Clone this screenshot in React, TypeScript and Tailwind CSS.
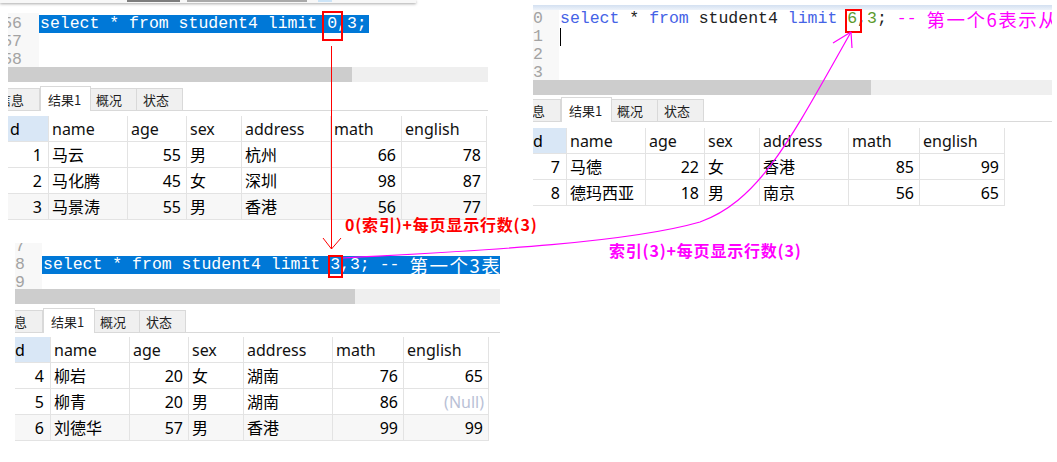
import React from 'react';

type Row = {
  id: string;
  name: string;
  age: string;
  sex: string;
  address: string;
  math: string;
  english: string | null;
};

const firstPage: Row[] = [
  { id: '1', name: '马云', age: '55', sex: '男', address: '杭州', math: '66', english: '78' },
  { id: '2', name: '马化腾', age: '45', sex: '女', address: '深圳', math: '98', english: '87' },
  { id: '3', name: '马景涛', age: '55', sex: '男', address: '香港', math: '56', english: '77' },
];

const secondPage: Row[] = [
  { id: '4', name: '柳岩', age: '20', sex: '女', address: '湖南', math: '76', english: '65' },
  { id: '5', name: '柳青', age: '20', sex: '男', address: '湖南', math: '86', english: null },
  { id: '6', name: '刘德华', age: '57', sex: '男', address: '香港', math: '99', english: '99' },
];

const thirdPage: Row[] = [
  { id: '7', name: '马德', age: '22', sex: '女', address: '香港', math: '85', english: '99' },
  { id: '8', name: '德玛西亚', age: '18', sex: '男', address: '南京', math: '56', english: '65' },
];

const headers = ['name', 'age', 'sex', 'address', 'math', 'english'];

const cell =
  'flex h-[26px] items-center overflow-hidden whitespace-nowrap border-r border-b border-[#e3e3e3]';

const code = "font-['Liberation_Mono',monospace] text-[16.5px] leading-[18px]";
const cjk =
  "inline-block align-top font-['Noto_Sans_CJK_SC',sans-serif] text-[18.5px] leading-[18px] tracking-[1.5px]";

interface TableProps {
  grid: string;
  rows: Row[];
  idPad: string;
  shadeLast?: boolean;
}

const ResultTable: React.FC<TableProps> = ({ grid, rows, idPad, shadeLast }) => (
  <div className={`grid ${grid} font-['Noto_Sans','Noto_Sans_CJK_SC',sans-serif] text-[16px] leading-none text-black`}>
    <div className={`${cell} bg-[#d9e7f6] ${idPad}`}>d</div>
    {headers.map((h) => (
      <div key={h} className={`${cell} pl-[3px] text-[#111]`}>
        {h}
      </div>
    ))}
    {rows.map((r, i) => {
      const bg = shadeLast && i === rows.length - 1 ? 'bg-[#f7f7f7]' : 'bg-white';
      return (
        <React.Fragment key={r.id}>
          <div className={`${cell} ${bg} justify-end pr-[6px]`}>{r.id}</div>
          <div className={`${cell} ${bg} pl-[3px]`}>{r.name}</div>
          <div className={`${cell} ${bg} justify-end pr-[5px]`}>{r.age}</div>
          <div className={`${cell} ${bg} pl-[3px]`}>{r.sex}</div>
          <div className={`${cell} ${bg} pl-[3px]`}>{r.address}</div>
          <div className={`${cell} ${bg} justify-end pr-[5px]`}>{r.math}</div>
          {r.english === null ? (
            <div className={`${cell} ${bg} justify-end pr-[4px] text-[#b9c1d6]`}>(Null)</div>
          ) : (
            <div className={`${cell} ${bg} justify-end pr-[5px]`}>{r.english}</div>
          )}
        </React.Fragment>
      );
    })}
  </div>
);

interface TabsProps {
  firstW: string;
  activeW: string;
  midW: string;
}

const Tabs: React.FC<TabsProps> = ({ firstW, activeW, midW }) => (
  <div className="flex h-[25px] items-end border-b border-[#d9d9d9] font-['Noto_Sans_CJK_SC',sans-serif] text-[13px] leading-none whitespace-nowrap text-[#1f1f1f]">
    <div className={`flex h-[22px] ${firstW} items-center justify-end overflow-hidden border-t border-r border-[#d9d9d9] bg-[#f0f0f0] pr-[15px]`}>
      <span className="shrink-0">信息</span>
    </div>
    <div className={`-mb-px flex h-[25px] ${activeW} items-center border-x border-t border-[#d9d9d9] bg-white pl-[7px]`}>
      结果1
    </div>
    <div className={`flex h-[22px] ${midW} items-center border-t border-r border-[#d9d9d9] bg-[#f0f0f0] pl-[5px]`}>
      概况
    </div>
    <div className="flex h-[22px] w-[46px] items-center border-t border-r border-[#d9d9d9] bg-[#f0f0f0] pl-[6px]">
      状态
    </div>
  </div>
);

const Scrollbar: React.FC<{ thumb: string }> = ({ thumb }) => (
  <div className="h-[15px] bg-[#efefef]">
    <div className={`h-full ${thumb} bg-[#cdcdcd]`} />
  </div>
);

const Annotations: React.FC = () => (
  <>
    <svg
      className="pointer-events-none absolute top-0 left-0"
      width={1057}
      height={462}
      viewBox="0 0 1057 462"
      fill="none"
    >
      {/* red boxes round the offsets */}
      <rect x={323} y={12} width={19} height={28} stroke="#ff0000" strokeWidth={2} />
      <rect x={329} y={256} width={13} height={21} stroke="#ff0000" strokeWidth={2} />
      <rect x={846} y={10} width={15} height={22} stroke="#ff0000" strokeWidth={2} />

      {/* red arrow down */}
      <path d="M331.5 46 V249" stroke="#ff0000" strokeWidth={1} />
      <path d="M323 238 L331.5 249 L341 238" stroke="#ff0000" strokeWidth={1} />

      {/* magenta arrow to the right panel */}
      <path
        d="M343 258 C450 252 620 245 700 222 C760 200 790 140 851 32"
        stroke="#ff00ff"
        strokeWidth={1.2}
      />
      <path d="M833 43 L851 32 M852 48 L851 32" stroke="#ff00ff" strokeWidth={1.2} />
    </svg>

    <div className="pointer-events-none absolute top-[216px] left-[345px] font-['Noto_Sans_CJK_SC',sans-serif] text-[16px] leading-[17px] font-bold tracking-[0.8px] whitespace-nowrap text-[#ff0000]">
      0(索引)+每页显示行数(3)
    </div>
    <div className="pointer-events-none absolute top-[241px] left-[609px] font-['Noto_Sans_CJK_SC',sans-serif] text-[16px] leading-[18px] font-bold tracking-[0.8px] whitespace-nowrap text-[#ff00ff]">
      索引(3)+每页显示行数(3)
    </div>
  </>
);

export default function App() {
  return (
    <div className="relative flex h-[462px] w-[1057px] items-start overflow-hidden bg-white">
      {/* left column: first two pages */}
      <div className="flex w-[500px] shrink-0 flex-col">
        <section className="mt-[13px] ml-2 w-[480px] overflow-hidden">
          <div className={`flex h-[54px] overflow-hidden ${code}`}>
            <div className="flex w-[31px] shrink-0 flex-col overflow-hidden bg-[#f8f8f8] pt-[2px] pr-[17px] text-[#a3a3a3]">
              <div className="flex h-[18px] justify-end">56</div>
              <div className="flex h-[18px] justify-end">57</div>
              <div className="flex h-[18px] justify-end">58</div>
            </div>
            <div className="pt-[2px] whitespace-pre">
              <div className="h-[18px]">
                <span className="inline-block h-[18px] bg-[#0078d7] pr-[2px] pl-px align-top text-white">
                  select * from student4 limit 0,3;
                </span>
              </div>
            </div>
          </div>
          <Scrollbar thumb="w-[344px]" />
          <div className="mt-1">
            <Tabs firstW="w-[32px]" activeW="w-[51px]" midW="w-[46px]" />
          </div>
          <div className="mt-[5px]">
            <ResultTable
              grid="grid-cols-[41px_79px_59px_55px_89px_71px_85px]"
              rows={firstPage}
              idPad="pl-[2px]"
              shadeLast
            />
          </div>
        </section>

        <section className="mt-[23px] ml-[15px] w-[485px] overflow-hidden">
          <div className={`flex h-[46px] overflow-hidden ${code}`}>
            <div className="flex w-[27px] shrink-0 flex-col overflow-hidden bg-[#f8f8f8] pr-[17px] text-[#a3a3a3]">
              <div className="-mt-[5px] flex h-[18px] justify-end">7</div>
              <div className="flex h-[18px] justify-end">8</div>
              <div className="flex h-[18px] justify-end">9</div>
            </div>
            <div className="whitespace-pre">
              <div className="-mt-[5px] h-[18px]" />
              <div className="h-[18px]">
                <span className="inline-block h-[18px] bg-[#0078d7] pr-[2px] pl-px align-top text-white">
                  {'select * from student4 limit 3,3; -- '}
                  <span className={cjk}>第一个3表示从</span>
                </span>
              </div>
            </div>
          </div>
          <Scrollbar thumb="w-[340px]" />
          <div className="mt-1">
            <Tabs firstW="w-[28px]" activeW="w-[52px]" midW="w-[45px]" />
          </div>
          <div className="mt-1">
            <ResultTable
              grid="grid-cols-[36px_79px_59px_55px_89px_71px_85px]"
              rows={secondPage}
              idPad="pl-0"
              shadeLast
            />
          </div>
        </section>
      </div>

      {/* right column: third page */}
      <section className="mt-[5px] ml-[33px] w-[519px] shrink-0 overflow-hidden">
        <div className="h-[5px] bg-linear-to-b from-[#d3e0f1] to-[#eef3fa]" />
        <div className={`flex h-[70px] overflow-hidden ${code}`}>
          <div className="flex w-[26px] shrink-0 flex-col overflow-hidden bg-[#f8f8f8] pr-[16px] text-[#a3a3a3]">
            <div className="flex h-[18px] justify-end">10</div>
            <div className="flex h-[18px] justify-end">11</div>
            <div className="flex h-[18px] justify-end">12</div>
            <div className="flex h-[18px] justify-end">13</div>
          </div>
          <div className="pl-px whitespace-pre">
            <div className="h-[18px] text-[#222]">
              <span className="text-[#4563e6]">select</span>
              {' * '}
              <span className="text-[#4563e6]">from</span>
              {' student4 '}
              <span className="text-[#4563e6]">limit</span>
              {' '}
              <span className="text-[#5c9a2c]">6</span>
              {','}
              <span className="text-[#5c9a2c]">3</span>
              {'; '}
              <span className="text-[#ff00ff]">{'-- '}</span>
              <span className={`text-[#ff00ff] ${cjk}`}>第一个6表示从</span>
            </div>
            <div className="h-[18px]">
              <span className="inline-block h-[18px] w-px bg-black align-top" />
            </div>
          </div>
        </div>
        <Scrollbar thumb="w-[338px]" />
        <div className="mt-[2px]">
          <Tabs firstW="w-[28px]" activeW="w-[51px]" midW="w-[46px]" />
        </div>
        <div className="mt-[6px]">
          <ResultTable
            grid="grid-cols-[34px_79px_59px_55px_89px_71px_85px]"
            rows={thirdPage}
            idPad="pl-0"
          />
        </div>
      </section>

      {/* edge of another window over the top left */}
      <div className="absolute top-0 left-0 h-[3px] w-[416px] bg-[#f7f7f7] shadow-[0_1px_3px_rgba(0,0,0,0.35)]">
        <div className="absolute top-0 left-[127px] h-[2px] w-[53px] bg-[#7d7d7d]" />
        <div className="absolute top-0 left-[187px] h-[2px] w-[120px] bg-[#a9a9a9]" />
        <div className="absolute top-0 left-[318px] h-[2px] w-[14px] bg-[#cce4f7]" />
      </div>

      <Annotations />
    </div>
  );
}
